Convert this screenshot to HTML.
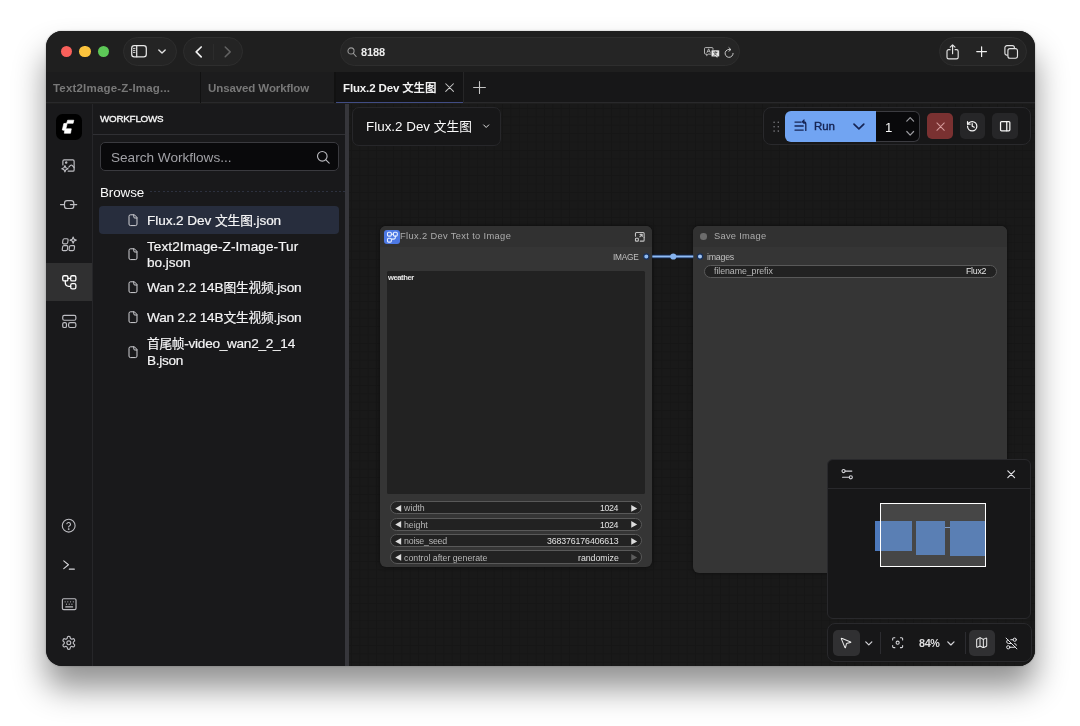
<!DOCTYPE html>
<html lang="zh">
<head>
<meta charset="utf-8">
<title>Flux.2 Dev 文生图</title>
<style>
*{box-sizing:border-box;margin:0;padding:0}
html,body{width:1080px;height:726px;overflow:hidden;background:#fff}
body{font-family:"Liberation Sans","Noto Sans CJK SC",sans-serif;color:#fff;position:relative}
.shadow{position:absolute;left:46px;top:31.3px;width:988.8px;height:634.4px;border-radius:16px;
  box-shadow:0 22px 32px rgba(0,0,0,.43),0 0 2px rgba(0,0,0,.3)}
.win{position:absolute;left:46px;top:31.3px;width:988.8px;height:634.4px;border-radius:16px;overflow:hidden;background:#1e1e1e}
.in{position:absolute;left:-46px;top:-31.3px;width:1080px;height:726px}
.a{position:absolute}
.t{position:absolute;white-space:nowrap;line-height:1;transform:translateY(calc(-50% + .6px));will-change:transform}
svg{position:absolute;overflow:visible}
.pill{position:absolute;background:#242424;border:1px solid #2e2e2e;border-radius:15px}
.ti{font-size:13.6px;color:#f4f4f5;-webkit-text-stroke:.2px #f4f4f5}
.wp{position:absolute;height:13.4px;border-radius:7px;background:#222222;border:1px solid #595959}
.wl{font-size:8.8px;color:#b8b8b8}
.wv{font-size:8.8px;color:#e2e2e2;right:461.7px}
.ti .cj{font-size:12.7px}
/* areas */
#titlebar{left:46px;top:31px;width:989px;height:41.2px;background:#1f1f1f}
#tabbar{left:46px;top:72.2px;width:989px;height:31.3px;background:linear-gradient(90deg,#1c1c1d 288px,#171718 288px)}
#strip{left:46px;top:103.5px;width:46.5px;height:563px;background:#19191b;border-right:1px solid #262629}
#panel{left:92.5px;top:103.5px;width:252.5px;height:563px;background:#19191b}
#split{left:345px;top:103.5px;width:3.7px;height:563px;background:#36363b}
#canvas{left:348.7px;top:103.5px;width:686px;height:563px;background-color:#191919;
  background-image:linear-gradient(#161616 1px,transparent 1px),linear-gradient(90deg,#161616 1px,transparent 1px);
  background-size:8.4px 8.4px;background-position:2px 4px}
</style>
</head>
<body>
<div class="shadow"></div>
<div class="win"><div class="in">

<!-- ===== title bar ===== -->
<div class="a" id="titlebar"></div>
<div class="a" style="left:60.5px;top:45.9px;width:11.6px;height:11.6px;border-radius:50%;background:#f9605b"></div>
<div class="a" style="left:79.2px;top:45.9px;width:11.6px;height:11.6px;border-radius:50%;background:#fbc33d"></div>
<div class="a" style="left:97.7px;top:45.9px;width:11.6px;height:11.6px;border-radius:50%;background:#5dc857"></div>
<div class="pill" style="left:123px;top:37.3px;width:53.7px;height:28.6px"></div>
<div class="pill" style="left:183.3px;top:37.3px;width:60px;height:28.6px"></div>
<div class="pill" style="left:340px;top:37px;width:399.7px;height:29px;background:#252525"></div>
<div class="pill" style="left:938.6px;top:37.2px;width:88.1px;height:28.8px"></div>
<span class="t" id="t_url" style="left:360.5px;top:51.9px;font-size:11px;font-weight:700;color:#ececec;letter-spacing:-0.091px">8188</span>

<!-- title bar icons -->
<svg style="left:130.8px;top:45.2px;width:16px;height:12.6px" viewBox="0 0 16 12.6" fill="none" stroke="#e6e6e6" stroke-width="1.25" stroke-linecap="round" stroke-linejoin="round"><rect x=".7" y=".7" width="14.6" height="11.2" rx="2.6"/><path d="M5.7 .9v10.8"/><path d="M2.4 3.4h1.6M2.4 5.4h1.6M2.4 7.4h1.6" stroke-width=".9"/></svg>
<svg style="left:158.4px;top:49.4px;width:8px;height:5px" viewBox="0 0 10 6" fill="none" stroke="#e0e0e0" stroke-width="1.7" stroke-linecap="round" stroke-linejoin="round"><path d="M1 1l4 4 4-4"/></svg>
<svg style="left:195px;top:45.8px;width:7.4px;height:11.8px" viewBox="0 0 7.4 11.8" fill="none" stroke="#f0f0f0" stroke-width="1.7" stroke-linecap="round" stroke-linejoin="round"><path d="M6.2 1L1.2 5.9l5 4.9"/></svg>
<div class="a" style="left:213.4px;top:43.5px;width:1px;height:16.5px;background:#2c2c2c"></div>
<svg style="left:224.3px;top:45.8px;width:7.4px;height:11.8px" viewBox="0 0 7.4 11.8" fill="none" stroke="#626262" stroke-width="1.5" stroke-linecap="round" stroke-linejoin="round"><path d="M1.2 1l5 4.9-5 4.9"/></svg>
<svg style="left:347px;top:46.6px;width:10px;height:10.4px" viewBox="0 0 20 21" fill="none" stroke="#9a9a9a" stroke-width="2.1" stroke-linecap="round"><circle cx="8" cy="8" r="6.2"/><path d="M12.8 13l5.6 6.2"/></svg>
<!-- translate -->
<svg style="left:703.60px;top:47.30px;width:16.00px;height:11.60px" viewBox="0 0 32 23.2" stroke-linejoin="round"><path d="M3 1.2h13a2 2 0 0 1 2 2v9a2 2 0 0 1-2 2H8.5l-3.2 3v-3H3a2 2 0 0 1-2-2v-9a2 2 0 0 1 2-2z" fill="none" stroke="#cfcfcf" stroke-width="1.7"/><path d="M6 11l3.3-7.4L12.6 11M7.2 8.6h4.2" fill="none" stroke="#cfcfcf" stroke-width="1.5" stroke-linecap="round"/><path d="M16.5 6.2h12.3a2 2 0 0 1 2 2v9.2a2 2 0 0 1-2 2h-1.6v3l-3.4-3h-7.3a2 2 0 0 1-2-2V8.200a2 2 0 0 1 2-2z" fill="#ececec" stroke="#242424" stroke-width="1"/><path d="M19 10.500h7.400M22.700 9v1.500M25 10.500c-.6 3-2.600 4.800-5.400 6M20.600 12.500c.8 1.800 2.600 3.300 5.200 4" fill="none" stroke="#222" stroke-width="1.200" stroke-linecap="round"/></svg>
<svg style="left:724.18px;top:46.73px;width:10.23px;height:11.35px" viewBox="0 0 22 24.4" fill="none" stroke="#d4d4d4" stroke-width="2" stroke-linecap="round" stroke-linejoin="round"><path d="M19.600 13.700a8.600 8.600 0 1 1-5.600-8.100"/><path d="M10.600 1.500l4.300 4-4.300 3.600"/></svg>
<!-- right pill icons -->
<svg style="left:946.2px;top:43.6px;width:13.2px;height:15.6px" viewBox="0 0 26.4 31.200" fill="none" stroke="#e4e4e4" stroke-width="2.300" stroke-linecap="round" stroke-linejoin="round"><path d="M8.200 11.400H5.400a3.400 3.400 0 0 0-3.400 3.400v11.600a3.400 3.400 0 0 0 3.400 3.400H21a3.400 3.400 0 0 0 3.400-3.400V14.800a3.400 3.400 0 0 0-3.400-3.400h-2.800"/><path d="M13.200 19.500V2M8.400 6.300L13.200 1.600 18 6.300"/></svg>
<svg style="left:976.1px;top:45.800px;width:11.2px;height:11.2px" viewBox="0 0 12 12" fill="none" stroke="#f0f0f0" stroke-width="1.300" stroke-linecap="round"><path d="M6 .8v10.400M.8 6h10.400"/></svg>
<svg style="left:1004.200px;top:44.800px;width:14.400px;height:14.200px" viewBox="0 0 28.800 28.400" fill="none" stroke="#e4e4e4" stroke-width="2.300" stroke-linejoin="round"><path d="M7.400 20.400H5.800A4 4 0 0 1 1.800 16.400V5.400a4 4 0 0 1 4-4h11a4 4 0 0 1 4 4v1.800"/><rect x="7.800" y="7.400" width="19.200" height="19.200" rx="4"/></svg>
<!-- ===== tab bar ===== -->
<div class="a" id="tabbar"></div>
<div class="a" style="left:46px;top:102.4px;width:989px;height:1.1px;background:#29292b"></div>
<div class="a" style="left:200px;top:72.2px;width:1px;height:31.3px;background:#111"></div>
<div class="a" style="left:334px;top:72.2px;width:1.6px;height:31.3px;background:#111"></div>
<div class="a" style="left:335.8px;top:72.2px;width:127.5px;height:31.3px;background:#141415;border-bottom:1.6px solid #414d84"></div>
<div class="a" style="left:463.3px;top:72.2px;width:1px;height:31.3px;background:#262627"></div>
<span class="t" id="t_tab1" style="left:53px;top:88px;font-size:11.5px;font-weight:700;color:#787878;letter-spacing:0.182px">Text2Image-Z-Imag...</span>
<span class="t" id="t_tab2" style="left:207.5px;top:88px;font-size:11.5px;font-weight:700;color:#787878;letter-spacing:-0.098px">Unsaved Workflow</span>
<span class="t" id="t_tab3" style="left:342.5px;top:88px;font-size:11.5px;font-weight:700;color:#f2f2f2;letter-spacing:-0.133px">Flux.2 Dev 文生图</span>
<!-- tab icons -->
<svg style="left:445px;top:83.400px;width:9.200px;height:9.200px" viewBox="0 0 10 10" fill="none" stroke="#c8c8c8" stroke-width="1.100" stroke-linecap="round"><path d="M.8 .8l8.400 8.400M9.200 .8L.8 9.200"/></svg>
<svg style="left:473px;top:81.300px;width:13px;height:13px" viewBox="0 0 13 13" fill="none" stroke="#c4c4c4" stroke-width="1.100" stroke-linecap="round"><path d="M6.500 .6v11.800M.6 6.500h11.800"/></svg>

<!-- ===== main ===== -->
<div class="a" id="strip"></div>
<div class="a" id="panel"></div>
<div class="a" id="split"></div>
<div class="a" id="canvas"></div>

<!-- ===== sidebar strip ===== -->
<div class="a" style="left:56px;top:113.6px;width:25.5px;height:26.4px;border-radius:6.5px;background:#000"></div>
<div class="a" style="left:46px;top:262.7px;width:46px;height:38.6px;background:#303031"></div>

<!-- ===== workflows panel ===== -->
<span class="t" id="t_wf" style="left:99.7px;top:118.4px;font-size:9.8px;font-weight:400;-webkit-text-stroke:.35px #f4f4f4;color:#f4f4f4;letter-spacing:-0.216px">WORKFLOWS</span>
<div class="a" style="left:92.5px;top:134px;width:252.5px;height:1px;background:#303034"></div>
<div class="a" style="left:100px;top:141.7px;width:238.5px;height:29.8px;border-radius:5px;background:#09090b;border:1px solid #3a3a3f"></div>
<span class="t" id="t_search" style="left:110.5px;top:156.7px;font-size:13.6px;color:#a1a1a6;letter-spacing:-0.007px">Search Workflows...</span>
<span class="t" id="t_browse" style="left:99.7px;top:191.7px;font-size:13.4px;color:#fafafa;letter-spacing:-0.071px">Browse</span>
<div class="a" style="left:150px;top:191px;width:195px;height:1.400px;background:repeating-linear-gradient(90deg,#2d313e 0 2px,transparent 2px 4.200px)"></div>
<div class="a" style="left:99.2px;top:206px;width:239.5px;height:27.8px;border-radius:4px;background:#272d3d"></div>
<span class="t ti" id="t_f1" style="left:146.8px;top:220px;letter-spacing:-0.075px">Flux.2 Dev <span class="cj">文生图</span>.json</span>
<span class="t ti" id="t_f2a" style="left:146.8px;top:245.6px;letter-spacing:0.065px">Text2Image-Z-Image-Tur</span>
<span class="t ti" id="t_f2b" style="left:146.8px;top:261.6px;letter-spacing:-0.057px">bo.json</span>
<span class="t ti" id="t_f3" style="left:146.8px;top:287.0px;letter-spacing:-0.152px">Wan 2.2 14B<span class="cj">图生视频</span>.json</span>
<span class="t ti" id="t_f4" style="left:146.8px;top:316.5px;letter-spacing:-0.152px">Wan 2.2 14B<span class="cj">文生视频</span>.json</span>
<span class="t ti" id="t_f5a" style="left:146.8px;top:343.2px;letter-spacing:-0.265px"><span class="cj">首尾帧</span>-video_wan2_2_14</span>
<span class="t ti" id="t_f5b" style="left:146.8px;top:359.7px;letter-spacing:-0.318px">B.json</span>
<!-- strip icons -->
<svg style="left:52px;top:110px;width:34px;height:34px" viewBox="0 0 726 726"><path fill="#fff" stroke="#fff" stroke-width="14" stroke-linejoin="round" d="M334 218H466L451 284H326L296 402H412L396 496H262L272 438L220 426L252 290L314 282Z"/></svg>
<svg style="left:61.3px;top:158.2px;width:15px;height:15px" viewBox="0 0 24 24" fill="none" stroke="#bdbdc2" stroke-width="1.900" stroke-linecap="round" stroke-linejoin="round"><path d="M11.500 21H19a2 2 0 0 0 2-2V5a2 2 0 0 0-2-2H5a2 2 0 0 0-2 2v6"/><circle cx="8.300" cy="7.300" r="1.100"/><path d="M21 15.500l-3.100-3.600a2 2 0 0 0-2.800 0L12.500 14.500"/><path d="M6.300 12.200l1.500 3.500 3.500 1.500-3.500 1.500-1.500 3.500-1.500-3.500-3.500-1.500 3.500-1.500z"/></svg>
<svg style="left:58px;top:198px;width:22px;height:14px" viewBox="0 0 22 14" fill="none" stroke="#bdbdc2" stroke-width="1.2" stroke-linecap="round" stroke-linejoin="round"><rect x="6.5" y="2.700" width="9.300" height="7.800" rx="2.600"/><path d="M2.500 6.600H6.500M12.400 6.600H18.700"/></svg>
<svg style="left:60.8px;top:235.6px;width:16.4px;height:16.4px" viewBox="0 0 24 24" fill="none" stroke="#bdbdc2" stroke-width="1.7" stroke-linecap="round" stroke-linejoin="round"><rect x="2.5" y="4" width="7.5" height="7.5" rx="1.8" transform="skewX(-8) translate(1.2 0)"/><rect x="2" y="14" width="7.5" height="7.5" rx="1.8" transform="skewX(-8) translate(2.6 0)"/><rect x="12" y="14" width="7.5" height="7.5" rx="1.8" transform="skewX(-8) translate(2.6 0)"/><path d="M17.8 1.5l1.3 3.2 3.2 1.3-3.2 1.3-1.3 3.2-1.3-3.2-3.2-1.3 3.2-1.3z"/></svg>
<svg style="left:60.6px;top:273.8px;width:16.6px;height:16.6px" viewBox="0 0 24 24" fill="none" stroke="#ffffff" stroke-width="1.9" stroke-linecap="round" stroke-linejoin="round"><rect x="2.5" y="2.5" width="7.5" height="7.5" rx="2.2"/><rect x="14" y="2.5" width="7.5" height="7.5" rx="2.2"/><rect x="14" y="14" width="7.5" height="7.5" rx="2.2"/><path d="M10 6.2h4"/><path d="M6.2 10v2.8a5 5 0 0 0 5 5H14"/></svg>
<svg style="left:60.6px;top:312.6px;width:16.6px;height:16.6px" viewBox="0 0 24 24" fill="none" stroke="#bdbdc2" stroke-width="1.7" stroke-linecap="round" stroke-linejoin="round"><rect x="2.5" y="3.5" width="19" height="7" rx="2.2"/><rect x="2.500" y="14" width="5.400" height="7" rx="2"/><rect x="11" y="14" width="10.500" height="7" rx="2.200"/></svg>
<svg style="left:61px;top:518.4px;width:15.4px;height:15.4px" viewBox="0 0 24 24" fill="none" stroke="#bdbdc2" stroke-width="1.7" stroke-linecap="round" stroke-linejoin="round"><circle cx="12" cy="12" r="10"/><path d="M9.1 9a3 3 0 0 1 5.8 1c0 2-3 2.6-3 4"/><circle cx="12" cy="17.3" r=".6" fill="#bdbdc2"/></svg>
<svg style="left:61.56px;top:557.66px;width:14.08px;height:14.08px" viewBox="0 0 24 24" fill="none" stroke="#d6d6da" stroke-width="1.9" stroke-linecap="round" stroke-linejoin="round"><path d="M3 5l8 6.5-8 6.5"/><path d="M12.5 19H21"/></svg>
<svg style="left:60.8px;top:595.8px;width:16.4px;height:16.4px" viewBox="0 0 24 24" fill="none" stroke="#bdbdc2" stroke-width="1.7" stroke-linecap="round" stroke-linejoin="round"><rect x="2" y="4" width="20" height="16" rx="2"/><path d="M6 8.5h.01M10 8.5h.01M14 8.5h.01M18 8.5h.01M8 12h.01M12 12h.01M16 12h.01M7 16h10"/></svg>
<svg style="left:60.9px;top:634.5px;width:15.6px;height:15.6px" viewBox="0 0 24 24" fill="none" stroke="#bdbdc2" stroke-width="1.8" stroke-linecap="round" stroke-linejoin="round"><path d="M12.22 2h-.44a2 2 0 0 0-2 2v.18a2 2 0 0 1-1 1.73l-.43.25a2 2 0 0 1-2 0l-.15-.08a2 2 0 0 0-2.73.73l-.22.38a2 2 0 0 0 .73 2.73l.15.1a2 2 0 0 1 1 1.72v.51a2 2 0 0 1-1 1.74l-.15.09a2 2 0 0 0-.73 2.73l.22.38a2 2 0 0 0 2.73.73l.15-.08a2 2 0 0 1 2 0l.43.25a2 2 0 0 1 1 1.73V20a2 2 0 0 0 2 2h.44a2 2 0 0 0 2-2v-.18a2 2 0 0 1 1-1.73l.43-.25a2 2 0 0 1 2 0l.15.08a2 2 0 0 0 2.73-.73l.22-.39a2 2 0 0 0-.73-2.73l-.15-.08a2 2 0 0 1-1-1.74v-.5a2 2 0 0 1 1-1.74l.15-.09a2 2 0 0 0 .73-2.73l-.22-.38a2 2 0 0 0-2.73-.73l-.15.08a2 2 0 0 1-2 0l-.43-.25a2 2 0 0 1-1-1.73V4a2 2 0 0 0-2-2z"/><circle cx="12" cy="12" r="3"/></svg>
<!-- panel icons -->
<svg style="left:315.8px;top:149.5px;width:14.4px;height:14.4px" viewBox="0 0 24 24" fill="none" stroke="#b8b8bd" stroke-width="1.9" stroke-linecap="round"><circle cx="10.5" cy="10.5" r="8"/><path d="M16.5 16.5L22 22"/></svg>
<!-- file icons -->
<svg style="left:128.4px;top:213.8px;width:10px;height:12.4px" viewBox="0 0 20 24.800" fill="none" stroke="#d2d2d6" stroke-width="2" stroke-linecap="round" stroke-linejoin="round"><path d="M12 1.600H5a3 3 0 0 0-3 3v15.600a3 3 0 0 0 3 3h10a3 3 0 0 0 3-3V7.600z"/><path d="M11.600 2v4a2 2 0 0 0 2 2h4"/></svg>
<svg style="left:128.4px;top:247.5px;width:10px;height:12.4px" viewBox="0 0 20 24.800" fill="none" stroke="#d2d2d6" stroke-width="2" stroke-linecap="round" stroke-linejoin="round"><path d="M12 1.600H5a3 3 0 0 0-3 3v15.600a3 3 0 0 0 3 3h10a3 3 0 0 0 3-3V7.600z"/><path d="M11.600 2v4a2 2 0 0 0 2 2h4"/></svg>
<svg style="left:128.4px;top:281.0px;width:10px;height:12.4px" viewBox="0 0 20 24.800" fill="none" stroke="#d2d2d6" stroke-width="2" stroke-linecap="round" stroke-linejoin="round"><path d="M12 1.600H5a3 3 0 0 0-3 3v15.600a3 3 0 0 0 3 3h10a3 3 0 0 0 3-3V7.600z"/><path d="M11.600 2v4a2 2 0 0 0 2 2h4"/></svg>
<svg style="left:128.4px;top:310.5px;width:10px;height:12.4px" viewBox="0 0 20 24.800" fill="none" stroke="#d2d2d6" stroke-width="2" stroke-linecap="round" stroke-linejoin="round"><path d="M12 1.600H5a3 3 0 0 0-3 3v15.600a3 3 0 0 0 3 3h10a3 3 0 0 0 3-3V7.600z"/><path d="M11.600 2v4a2 2 0 0 0 2 2h4"/></svg>
<svg style="left:128.4px;top:345.5px;width:10px;height:12.4px" viewBox="0 0 20 24.800" fill="none" stroke="#d2d2d6" stroke-width="2" stroke-linecap="round" stroke-linejoin="round"><path d="M12 1.600H5a3 3 0 0 0-3 3v15.600a3 3 0 0 0 3 3h10a3 3 0 0 0 3-3V7.600z"/><path d="M11.600 2v4a2 2 0 0 0 2 2h4"/></svg>

<!-- ===== breadcrumb ===== -->
<div class="a" style="left:352px;top:106.7px;width:148.8px;height:39.1px;border-radius:7px;background:#171718;border:1px solid #27272a"></div>
<span class="t" id="t_bc" style="left:365.8px;top:126.4px;font-size:13.4px;color:#fafafa;letter-spacing:0.008px">Flux.2 Dev <span class="cj" style="font-size:12.7px">文生图</span></span>
<svg style="left:482.5px;top:123px;width:6.4px;height:6.4px" viewBox="0 0 10 10" fill="none" stroke="#e8e8e8" stroke-width="1.5" stroke-linecap="round" stroke-linejoin="round"><path d="M1 3l4 4 4-4"/></svg>

<!-- ===== run toolbar ===== -->
<div class="a" style="left:763.3px;top:106.9px;width:267.9px;height:38.3px;border-radius:8px;background:#171718;border:1px solid #29292c"></div>
<svg style="left:772.6px;top:121.3px;width:6.4px;height:11.4px" viewBox="0 0 6.400 11.400" fill="#7d7d82"><circle cx="1.100" cy="1.300" r=".8"/><circle cx="5.300" cy="1.300" r=".8"/><circle cx="1.100" cy="5.700" r=".8"/><circle cx="5.300" cy="5.700" r=".8"/><circle cx="1.100" cy="10.100" r=".8"/><circle cx="5.300" cy="10.100" r=".8"/></svg>
<div class="a" style="left:785px;top:110.8px;width:91px;height:31px;border-radius:6px 0 0 6px;background:#71a4f2"></div>
<svg style="left:793px;top:118px;width:16px;height:16px" viewBox="0 0 16 16" fill="none" stroke="#172554" stroke-width="1.350" stroke-linecap="round" stroke-linejoin="round"><path d="M2 4.100h6.200M2 8h8.200M2 12.100h8.200"/><path d="M12.800 12.400V6.300a2.600 2.600 0 0 0-2.600-2.600H9.900"/><path d="M11.100 2.100L9.500 3.700l1.600 1.500"/></svg>
<span class="t" id="t_run" style="left:814.2px;top:126px;font-size:11.5px;font-weight:400;-webkit-text-stroke:.42px #172554;color:#172554;letter-spacing:-0.151px">Run</span>
<svg style="left:853.3px;top:122.6px;width:11.8px;height:7px" viewBox="0 0 12 7" fill="none" stroke="#172554" stroke-width="1.7" stroke-linecap="round" stroke-linejoin="round"><path d="M1 1l5 5 5-5"/></svg>
<div class="a" style="left:875.8px;top:111px;width:44.4px;height:30.6px;border-radius:0 6px 6px 0;background:#09090b;border:1px solid #3b3b40;border-left:none"></div>
<span class="t" id="t_one" style="left:885px;top:126.6px;font-size:13.2px;color:#fafafa">1</span>
<svg style="left:905.8px;top:115.4px;width:8.400px;height:22px" viewBox="0 0 8.400 22" fill="none" stroke="#9a9a9f" stroke-width="1.200" stroke-linecap="round" stroke-linejoin="round"><path d="M.8 6.200l3.400-3.600 3.400 3.600"/><path d="M.8 16.500l3.400 3.600 3.400-3.600"/></svg>
<div class="a" style="left:927.2px;top:113.2px;width:26px;height:26px;border-radius:5px;background:#7a3131"></div>
<svg style="left:935.6px;top:121.6px;width:9.2px;height:9.2px" viewBox="0 0 10 10" fill="none" stroke="#d49a9a" stroke-width="1.1" stroke-linecap="round"><path d="M1 1l8 8M9 1l-8 8"/></svg>
<div class="a" style="left:959.7px;top:113.2px;width:25.6px;height:26px;border-radius:5px;background:#262628"></div>
<svg style="left:966.3px;top:120.2px;width:12.4px;height:12.4px" viewBox="0 0 24 24" fill="none" stroke="#f4f4f4" stroke-width="2.4" stroke-linecap="round" stroke-linejoin="round"><path d="M3 12a9 9 0 1 0 9-9 9.75 9.75 0 0 0-6.74 2.74L3 8"/><path d="M3 3v5h5"/><path d="M12 7v5l4 2"/></svg>
<div class="a" style="left:992px;top:113.2px;width:25.6px;height:26px;border-radius:5px;background:#262628"></div>
<svg style="left:998.7px;top:120.2px;width:12.4px;height:12.4px" viewBox="0 0 24 24" fill="none" stroke="#f4f4f4" stroke-width="2.4" stroke-linecap="round" stroke-linejoin="round"><rect x="3" y="3" width="18" height="18" rx="2"/><path d="M15 3v18"/></svg>

<!-- ===== node 1 ===== -->
<div class="a" style="left:380.3px;top:226.3px;width:272px;height:340.8px;border-radius:6px;background:#353535;box-shadow:0 0 4px rgba(0,0,0,.5)"></div>
<div class="a" style="left:380.3px;top:226.3px;width:272px;height:21.2px;border-radius:6px 6px 0 0;background:#313131"></div>
<div class="a" style="left:384.2px;top:229.6px;width:15.6px;height:14.4px;border-radius:3px;background:#4c78e4"></div>
<svg style="left:385.6px;top:230.6px;width:12.8px;height:12.4px" viewBox="0 0 24 24" fill="none" stroke="#e8efff" stroke-width="2.1" stroke-linecap="round" stroke-linejoin="round"><rect x="2.5" y="2.5" width="7.5" height="7.5" rx="2.2"/><rect x="14" y="2.5" width="7.5" height="7.5" rx="2.2"/><rect x="14" y="14" width="7.5" height="7.5" rx="2.2" transform="translate(-11.5 0)"/><path d="M10 6.2h4"/><path d="M17.8 10v1.8a4 4 0 0 1-4 4H10.5"/></svg>
<span class="t" id="t_n1" style="left:400.3px;top:236.3px;font-size:9.3px;color:#adadad;letter-spacing:0.354px">Flux.2 Dev Text to Image</span>
<svg style="left:634.2px;top:230.6px;width:11.6px;height:11.6px" viewBox="0 0 24 24" fill="none" stroke="#c4c4c4" stroke-width="2.2" stroke-linecap="round" stroke-linejoin="round"><path d="M21 13V5a2 2 0 0 0-2-2H5a2 2 0 0 0-2 2v6"/><path d="M21 13v6a2 2 0 0 1-2 2h-6"/><rect x="3" y="15" width="6" height="6" rx="1.5"/><path d="M12 12l5-5M12.5 7H17v4.5"/></svg>
<span class="t" id="t_image" style="left:613.3px;top:256.9px;font-size:8.3px;color:#c0c0c0;letter-spacing:-0.212px">IMAGE</span>
<div class="a" style="left:386.7px;top:271.3px;width:258.6px;height:223px;background:#222222;border-radius:1.5px"></div>
<span class="t" id="t_weather" style="left:388px;top:277.2px;font-size:7.6px;font-weight:700;color:#e6e6e6;letter-spacing:-0.417px">weather</span>

<div class="wp" style="left:390.3px;top:501.1px;width:252.2px"></div>
<div class="wp" style="left:390.3px;top:517.5px;width:252.2px"></div>
<div class="wp" style="left:390.3px;top:533.9px;width:252.2px"></div>
<div class="wp" style="left:390.3px;top:550.3px;width:252.2px"></div>
<span class="t wl" id="t_w1" style="left:403.8px;top:508.3px;letter-spacing:0.039px">width</span>
<span class="t wl" id="t_w2" style="left:403.8px;top:524.7px;letter-spacing:-0.056px">height</span>
<span class="t wl" id="t_w3" style="left:403.8px;top:541.1px;letter-spacing:-0.200px">noise_seed</span>
<span class="t wl" id="t_w4" style="left:403.8px;top:557.5px;letter-spacing:-0.011px">control after generate</span>
<span class="t wv" id="t_v1" style="top:508.3px;letter-spacing:-0.426px">1024</span>
<span class="t wv" id="t_v2" style="top:524.7px;letter-spacing:-0.426px">1024</span>
<span class="t wv" id="t_v3" style="top:541.1px;letter-spacing:-0.128px">368376176406613</span>
<span class="t wv" id="t_v4" style="top:557.5px;letter-spacing:-0.035px">randomize</span>
<svg style="left:394.7px;top:504.9px;width:6.400px;height:6.800px" viewBox="0 0 7 8"><path fill="#dcdcdc" d="M0 4L7 0V8Z"/></svg>
<svg style="left:394.7px;top:521.3px;width:6.400px;height:6.800px" viewBox="0 0 7 8"><path fill="#dcdcdc" d="M0 4L7 0V8Z"/></svg>
<svg style="left:394.7px;top:537.7px;width:6.400px;height:6.800px" viewBox="0 0 7 8"><path fill="#dcdcdc" d="M0 4L7 0V8Z"/></svg>
<svg style="left:394.7px;top:554.1px;width:6.400px;height:6.800px" viewBox="0 0 7 8"><path fill="#dcdcdc" d="M0 4L7 0V8Z"/></svg>
<svg style="left:631.2px;top:504.9px;width:6.400px;height:6.800px" viewBox="0 0 7 8"><path fill="#dcdcdc" d="M7 4L0 0V8Z"/></svg>
<svg style="left:631.2px;top:521.3px;width:6.400px;height:6.800px" viewBox="0 0 7 8"><path fill="#dcdcdc" d="M7 4L0 0V8Z"/></svg>
<svg style="left:631.2px;top:537.7px;width:6.400px;height:6.800px" viewBox="0 0 7 8"><path fill="#dcdcdc" d="M7 4L0 0V8Z"/></svg>
<svg style="left:631.2px;top:554.1px;width:6.400px;height:6.800px" viewBox="0 0 7 8"><path fill="#5c5c5c" d="M7 4L0 0V8Z"/></svg>

<!-- ===== node 2 ===== -->
<div class="a" style="left:693.3px;top:226.3px;width:313.7px;height:347px;border-radius:6px;background:#353535;box-shadow:0 0 4px rgba(0,0,0,.5)"></div>
<div class="a" style="left:693.3px;top:226.3px;width:313.7px;height:21.2px;border-radius:6px 6px 0 0;background:#313131"></div>
<div class="a" style="left:700.1px;top:233.2px;width:6.6px;height:6.6px;border-radius:50%;background:#6c6c6c"></div>
<span class="t" id="t_n2" style="left:713.5px;top:236.3px;font-size:9.3px;color:#adadad;letter-spacing:0.275px">Save Image</span>
<span class="t" id="t_images" style="left:707px;top:257.1px;font-size:8.8px;color:#c0c0c0;letter-spacing:-0.232px">images</span>
<div class="wp" style="left:703.7px;top:264.5px;width:293px"></div>
<span class="t wl" id="t_fp" style="left:713.7px;top:271.4px;letter-spacing:-0.062px">filename_prefix</span>
<span class="t wv" id="t_fx" style="top:271.4px;right:94.2px;letter-spacing:-0.254px">Flux2</span>

<!-- link -->
<svg style="left:640px;top:250px;width:66px;height:13px" viewBox="0 0 66 13"><path d="M12.300 6.500H53.300" stroke="#10244a" stroke-width="3.800" fill="none"/><path d="M12.300 6.500H53.300" stroke="#8fbcf5" stroke-width="1.900" fill="none"/><circle cx="33.3" cy="6.5" r="3.1" fill="#86b3ee"/><circle cx="6.3" cy="6.5" r="2.6" fill="#8fbaf0" stroke="#15305e" stroke-width="1.2"/><circle cx="60" cy="6.5" r="2.6" fill="#a3c6f3" stroke="#15305e" stroke-width="1.2"/></svg>
<!-- ===== minimap ===== -->
<div class="a" style="left:827.4px;top:458.6px;width:204px;height:160px;border-radius:6px;background:#171718;border:1px solid #29292c"></div>
<div class="a" style="left:828.4px;top:488px;width:202px;height:1px;background:#29292c"></div>
<svg style="left:841px;top:467.6px;width:12.4px;height:12.4px" viewBox="0 0 24 24" fill="none" stroke="#d6d6da" stroke-width="2.1" stroke-linecap="round" stroke-linejoin="round"><circle cx="5" cy="6" r="3"/><path d="M8 6h13"/><circle cx="19" cy="18" r="3"/><path d="M3 18h13"/></svg>
<svg style="left:1007px;top:470px;width:8.4px;height:8.4px" viewBox="0 0 10 10" fill="none" stroke="#e4e4e7" stroke-width="1.4" stroke-linecap="round"><path d="M1 1l8 8M9 1l-8 8"/></svg>
<div class="a" style="left:880px;top:503.2px;width:105.6px;height:63.8px;background:#464646"></div>
<div class="a" style="left:875px;top:521px;width:37.2px;height:30px;background:#5a7fb4"></div>
<div class="a" style="left:875px;top:521px;width:5.6px;height:30px;background:#4d79bb"></div>
<div class="a" style="left:916px;top:521px;width:29px;height:33.5px;background:#5a7fb4"></div>
<div class="a" style="left:949.6px;top:521px;width:35.2px;height:34.8px;background:#5a7fb4"></div>
<div class="a" style="left:945px;top:527px;width:4.6px;height:1px;background:#7f9cc8"></div>
<div class="a" style="left:880px;top:503.2px;width:105.6px;height:63.8px;border:1.5px solid #fff"></div>

<!-- ===== bottom toolbar ===== -->
<div class="a" style="left:826.7px;top:623.1px;width:205.5px;height:39.4px;border-radius:8px;background:#171718;border:1px solid #29292c"></div>
<div class="a" style="left:833px;top:630px;width:26.500px;height:25.600px;border-radius:5px;background:#303032"></div>
<svg style="left:839.39px;top:636.29px;width:13.52px;height:13.52px" viewBox="0 0 24 24" fill="none" stroke="#ececec" stroke-width="1.800" stroke-linecap="round" stroke-linejoin="round"><path d="M4.037 4.688a.495.495 0 0 1 .651-.651l16 6.500a.5.5 0 0 1-.063.947l-6.124 1.580a2 2 0 0 0-1.438 1.435l-1.579 6.126a.5.5 0 0 1-.947.063z"/></svg>
<svg style="left:865px;top:640.6px;width:7.6px;height:4.8px" viewBox="0 0 10 6" fill="none" stroke="#d4d4d8" stroke-width="1.6" stroke-linecap="round" stroke-linejoin="round"><path d="M1 1l4 4 4-4"/></svg>
<div class="a" style="left:880px;top:632px;width:1px;height:22px;background:#2c2c30"></div>
<svg style="left:890.74px;top:635.84px;width:13.32px;height:13.32px" viewBox="0 0 24 24" fill="none" stroke="#d8d8dc" stroke-width="1.900" stroke-linecap="round" stroke-linejoin="round"><circle cx="12" cy="12" r="2.800"/><path d="M3 7V5a2 2 0 0 1 2-2h2"/><path d="M17 3h2a2 2 0 0 1 2 2v2"/><path d="M21 17v2a2 2 0 0 1-2 2h-2"/><path d="M7 21H5a2 2 0 0 1-2-2v-2"/></svg>
<span class="t" id="t_zoom" style="left:918.7px;top:643.2px;font-size:10.8px;font-weight:700;color:#dededf;letter-spacing:-0.362px">84%</span>
<svg style="left:946.6px;top:640.6px;width:7.8px;height:4.8px" viewBox="0 0 10 6" fill="none" stroke="#d4d4d8" stroke-width="1.6" stroke-linecap="round" stroke-linejoin="round"><path d="M1 1l4 4 4-4"/></svg>
<div class="a" style="left:965.3px;top:632px;width:1px;height:22px;background:#2c2c30"></div>
<div class="a" style="left:969px;top:630px;width:26.200px;height:25.600px;border-radius:5px;background:#303032"></div>
<svg style="left:975.46px;top:636.16px;width:13.38px;height:13.38px" viewBox="0 0 24 24" fill="none" stroke="#ececec" stroke-width="1.800" stroke-linecap="round" stroke-linejoin="round"><path d="M14.106 5.553a2 2 0 0 0 1.788 0l3.659-1.830A1 1 0 0 1 21 4.619v12.764a1 1 0 0 1-.553.894l-4.553 2.277a2 2 0 0 1-1.788 0l-4.212-2.106a2 2 0 0 0-1.788 0l-3.659 1.830A1 1 0 0 1 3 19.381V6.618a1 1 0 0 1 .553-.894l4.553-2.277a2 2 0 0 1 1.788 0z"/><path d="M15 5.764v15"/><path d="M9 3.236v15"/></svg>
<svg style="left:1004.70px;top:636.90px;width:12.99px;height:12.99px" viewBox="0 0 24 24" fill="none" stroke="#e4e4e7" stroke-width="1.800" stroke-linecap="round" stroke-linejoin="round"><circle cx="6" cy="19" r="3"/><path d="M9 19h8.500c.4 0 .9-.1 1.300-.2"/><path d="M5.200 5.200A3.500 3.530 0 0 0 6.500 12H12"/><path d="m2 2 20 20"/><path d="M21 15.300a3.500 3.500 0 0 0-3.300-3.300"/><path d="M15 5h-4.300"/><circle cx="18" cy="5" r="3"/></svg>


</div></div>
</body>
</html>
